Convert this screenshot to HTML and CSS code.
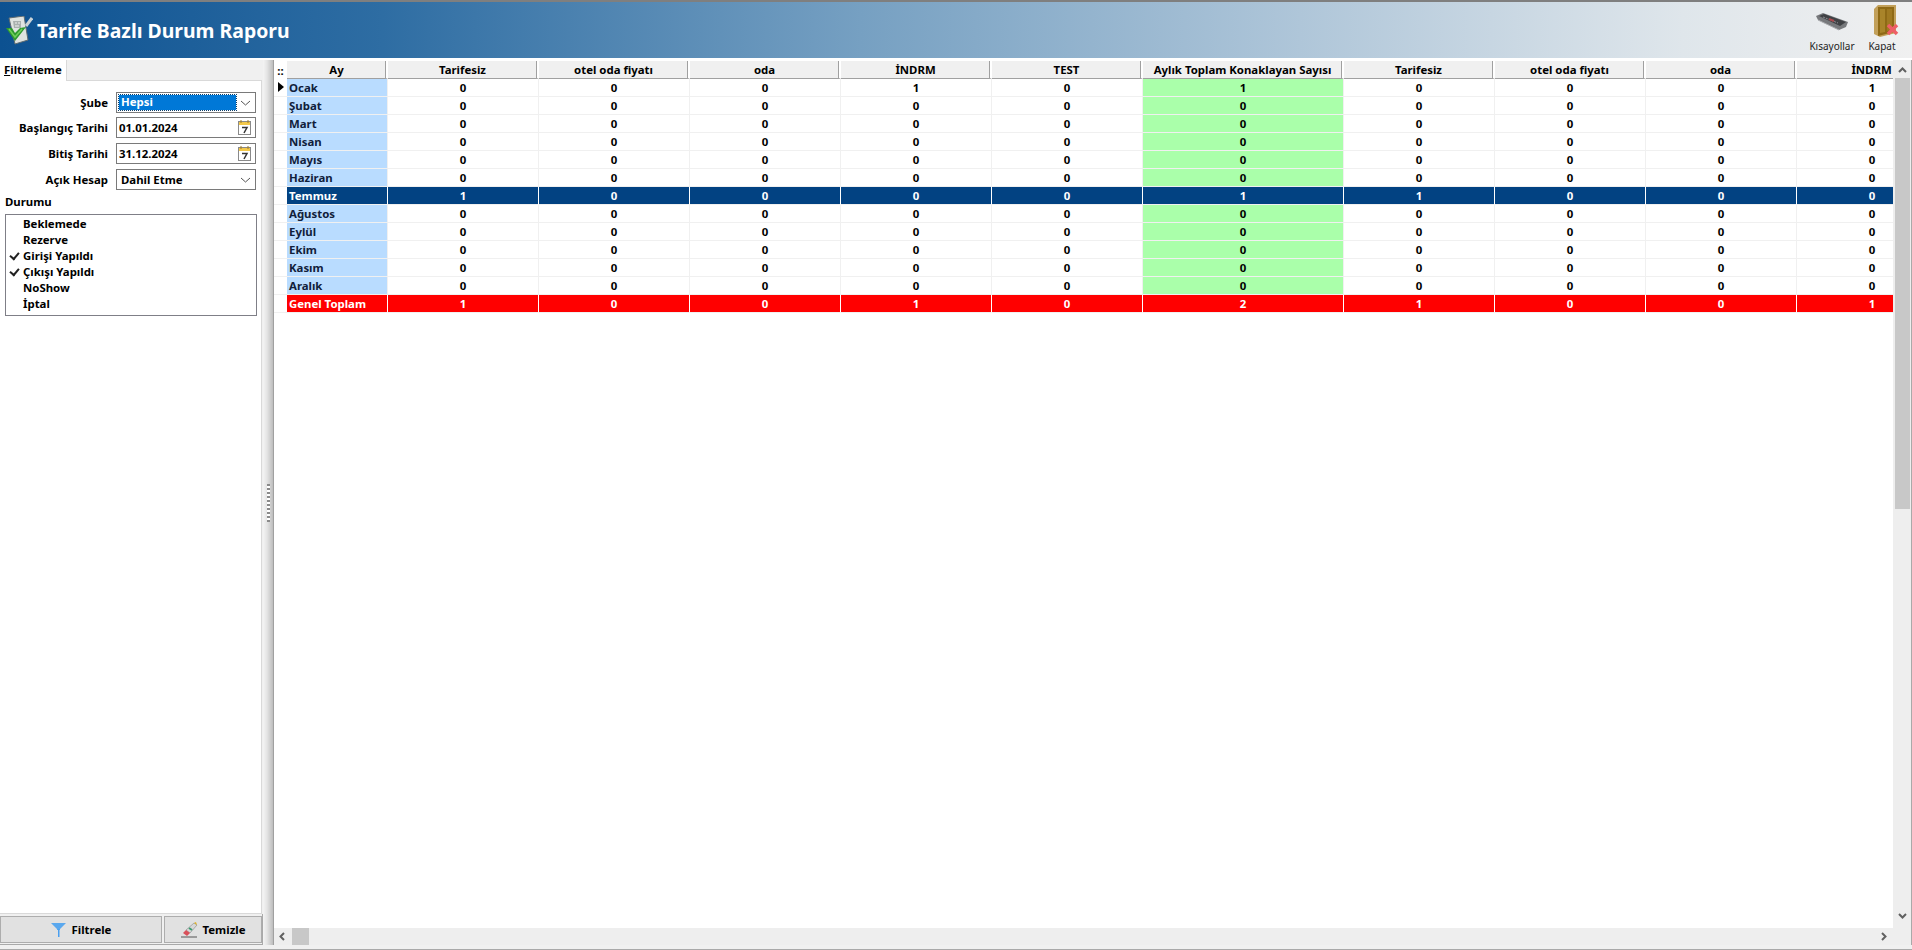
FILE: index.html
```html
<!doctype html>
<html lang="tr">
<head>
    <meta charset="utf-8">
    <title>Tarife Bazlı Durum Raporu</title>
    <link rel="stylesheet" href="styles.css">
</head>
<body>
    <header class="title-bar">
        <svg class="report-icon" width="28" height="29" viewBox="0 0 28 29">
            <path d="M4 2 L19 0 L23 24 L10 28 Z" fill="#dfe3e0" stroke="#5f6b70"/>
            <path d="M8 5h8v7H9Z" fill="#a9b0ae"/>
            <path d="M10 7h2M13 7h2M10 10h4" stroke="#eef0ee"/>
            <path d="M21 10 L27 2" stroke="#c9d2d6" stroke-width="3"/>
            <path d="M1 12 L7 12 L10 17 L15 12 L21 11 L10 25 Z" fill="#2f9a2f"/>
            <path d="M4 13 L10 21 L17 13" stroke="#6fd05a" stroke-width="1.500" fill="none"/>
        </svg>
        <h1>Tarife Bazlı Durum Raporu</h1>
        <div class="title-actions">
            <div class="action action-keys">
                <svg width="34" height="19" viewBox="0 0 34 19">
                    <path d="M1 4 L8 1 L33 10 L31 15 L24 18 L3 8 Z" fill="#77797c"/>
                    <path d="M4 4 L9 2 L31 10 L25 14 Z" fill="#3f4144"/>
                    <path d="M8 5l15 6" stroke="#8c8c90" stroke-width="1" stroke-dasharray="2 1"/>
                    <path d="M14 7l5 2" stroke="#a84a4e" stroke-width="2"/>
                    <path d="M3 8 L24 18" stroke="#a9abae" stroke-width="1"/>
                </svg>
                <span>Kısayollar</span>
            </div>
            <div class="action action-close">
                <svg width="25" height="32" viewBox="0 0 25 32">
                    <path d="M0 4 L4 0 L22 0 L22 28 L6 32 L0 29 Z" fill="#c2a05a"/>
                    <path d="M4 2 H20 V27 L4 31 Z" fill="#8f6a16"/>
                    <path d="M6 4 H11 V27 L6 28 Z" fill="#a9842a"/>
                    <path d="M13 4 H18 V25 L13 26 Z" fill="#a07a22"/>
                    <path d="M14 20l9 9M23 20l-9 9" stroke="#ee5f66" stroke-width="3.500"/>
                </svg>
                <span>Kapat</span>
            </div>
        </div>
    </header>

    <main class="workspace">
        <aside class="side">
            <div class="tab-strip">
                <div class="tab"><u>F</u>iltreleme</div>
            </div>
            <div class="filter-panel">
                <div class="form-row">
                    <label>Şube</label>
                    <div class="field">
                        <span class="field-selected">Hepsi</span>
                        <svg class="chevron" width="11" height="6" viewBox="0 0 11 6"><path d="M1 1l4.500 4 4.500-4" fill="none" stroke="#555"/></svg>
                    </div>
                </div>
                <div class="form-row">
                    <label>Başlangıç Tarihi</label>
                    <div class="field">
                        <span class="field-text">01.01.2024</span>
                        <svg class="calendar" width="13" height="15" viewBox="0 0 13 15">
                            <rect x="0.500" y="1.500" width="12" height="13" fill="#fff" stroke="#8a8a8a"/>
                            <rect x="1" y="2" width="11" height="3" fill="#f3c84a"/>
                            <path d="M3 0v3M10 0v3" stroke="#a07a20"/>
                            <path d="M4 7.500h5L6 13" fill="none" stroke="#333" stroke-width="1.500"/>
                        </svg>
                    </div>
                </div>
                <div class="form-row">
                    <label>Bitiş Tarihi</label>
                    <div class="field">
                        <span class="field-text">31.12.2024</span>
                        <svg class="calendar" width="13" height="15" viewBox="0 0 13 15">
                            <rect x="0.500" y="1.500" width="12" height="13" fill="#fff" stroke="#8a8a8a"/>
                            <rect x="1" y="2" width="11" height="3" fill="#f3c84a"/>
                            <path d="M3 0v3M10 0v3" stroke="#a07a20"/>
                            <path d="M4 7.500h5L6 13" fill="none" stroke="#333" stroke-width="1.500"/>
                        </svg>
                    </div>
                </div>
                <div class="form-row">
                    <label>Açık Hesap</label>
                    <div class="field">
                        <span class="field-text field-pad">Dahil Etme</span>
                        <svg class="chevron" width="11" height="6" viewBox="0 0 11 6"><path d="M1 1l4.500 4 4.500-4" fill="none" stroke="#555"/></svg>
                    </div>
                </div>
                <div class="group-label">Durumu</div>
                <ul class="check-list">
                    <li>Beklemede</li>
                    <li>Rezerve</li>
                    <li class="checked">Girişi Yapıldı</li>
                    <li class="checked">Çıkışı Yapıldı</li>
                    <li>NoShow</li>
                    <li>İptal</li>
                </ul>
            </div>
            <div class="side-buttons">
                <button class="btn btn-filter">
                    <svg width="16" height="15" viewBox="0 0 16 15"><path d="M0 1h15L9 7v1H6V7Z" fill="#5aa8ee"/><path d="M7 7h1.500v8H7z" fill="#4a9ff0"/></svg>
                    Filtrele
                </button>
                <button class="btn btn-clear">
                    <svg width="17" height="16" viewBox="0 0 17 16">
                        <path d="M5 8 L13 1 L16 3 L9 11 Z" fill="#d8d8d8" stroke="#777" stroke-width="0.500"/>
                        <path d="M13 1 L15 0 L16 3Z" fill="#e0b020"/>
                        <path d="M5 8 L9 11 L6 14 L2 11Z" fill="#d9505a"/>
                        <path d="M8 6 L11 8" stroke="#3a9a70" stroke-width="2"/>
                        <path d="M0 15h16" stroke="#555"/>
                    </svg>
                    Temizle
                </button>
            </div>
        </aside>

        <div class="splitter"><div class="grip"></div></div>

        <section class="grid-area">
            <div class="grid-main">
                <div class="grid-clip">
                    <table class="report">
                        <colgroup>
                            <col class="c-ind"><col class="c-month">
                            <col class="c-n"><col class="c-n"><col class="c-n"><col class="c-n"><col class="c-n">
                            <col class="c-total">
                            <col class="c-n"><col class="c-n"><col class="c-n"><col class="c-n">
                        </colgroup>
                        <thead>
                            <tr>
                                <th class="corner">::</th><th>Ay</th>
                                <th>Tarifesiz</th><th>otel oda fiyatı</th><th>oda</th><th>İNDRM</th><th>TEST</th>
                                <th>Aylık Toplam Konaklayan Sayısı</th>
                                <th>Tarifesiz</th><th>otel oda fiyatı</th><th>oda</th><th>İNDRM</th>
                            </tr>
                        </thead>
                        <tbody>
                            <tr><td class="ind current"></td><td class="month">Ocak</td><td>0</td><td>0</td><td>0</td><td>1</td><td>0</td><td class="total">1</td><td>0</td><td>0</td><td>0</td><td>1</td></tr>
                            <tr><td class="ind"></td><td class="month">Şubat</td><td>0</td><td>0</td><td>0</td><td>0</td><td>0</td><td class="total">0</td><td>0</td><td>0</td><td>0</td><td>0</td></tr>
                            <tr><td class="ind"></td><td class="month">Mart</td><td>0</td><td>0</td><td>0</td><td>0</td><td>0</td><td class="total">0</td><td>0</td><td>0</td><td>0</td><td>0</td></tr>
                            <tr><td class="ind"></td><td class="month">Nisan</td><td>0</td><td>0</td><td>0</td><td>0</td><td>0</td><td class="total">0</td><td>0</td><td>0</td><td>0</td><td>0</td></tr>
                            <tr><td class="ind"></td><td class="month">Mayıs</td><td>0</td><td>0</td><td>0</td><td>0</td><td>0</td><td class="total">0</td><td>0</td><td>0</td><td>0</td><td>0</td></tr>
                            <tr><td class="ind"></td><td class="month">Haziran</td><td>0</td><td>0</td><td>0</td><td>0</td><td>0</td><td class="total">0</td><td>0</td><td>0</td><td>0</td><td>0</td></tr>
                            <tr class="row-selected"><td class="ind"></td><td class="month">Temmuz</td><td>1</td><td>0</td><td>0</td><td>0</td><td>0</td><td class="total">1</td><td>1</td><td>0</td><td>0</td><td>0</td></tr>
                            <tr><td class="ind"></td><td class="month">Ağustos</td><td>0</td><td>0</td><td>0</td><td>0</td><td>0</td><td class="total">0</td><td>0</td><td>0</td><td>0</td><td>0</td></tr>
                            <tr><td class="ind"></td><td class="month">Eylül</td><td>0</td><td>0</td><td>0</td><td>0</td><td>0</td><td class="total">0</td><td>0</td><td>0</td><td>0</td><td>0</td></tr>
                            <tr><td class="ind"></td><td class="month">Ekim</td><td>0</td><td>0</td><td>0</td><td>0</td><td>0</td><td class="total">0</td><td>0</td><td>0</td><td>0</td><td>0</td></tr>
                            <tr><td class="ind"></td><td class="month">Kasım</td><td>0</td><td>0</td><td>0</td><td>0</td><td>0</td><td class="total">0</td><td>0</td><td>0</td><td>0</td><td>0</td></tr>
                            <tr><td class="ind"></td><td class="month">Aralık</td><td>0</td><td>0</td><td>0</td><td>0</td><td>0</td><td class="total">0</td><td>0</td><td>0</td><td>0</td><td>0</td></tr>
                            <tr class="row-sum"><td class="ind"></td><td class="month">Genel Toplam</td><td>1</td><td>0</td><td>0</td><td>1</td><td>0</td><td class="total">2</td><td>1</td><td>0</td><td>0</td><td>1</td></tr>
                        </tbody>
                    </table>
                </div>
                <div class="vscroll">
                    <svg class="sb-arrow" width="9" height="6" viewBox="0 0 9 6"><path d="M1 5l3.500-3.500L8 5" fill="none" stroke="#606060" stroke-width="2"/></svg>
                    <div class="vthumb"></div>
                    <div class="sb-fill"></div>
                    <svg class="sb-arrow" width="9" height="6" viewBox="0 0 9 6"><path d="M1 1l3.500 3.500L8 1" fill="none" stroke="#606060" stroke-width="2"/></svg>
                </div>
            </div>
            <div class="hscroll">
                <svg class="sb-arrow-h" width="6" height="9" viewBox="0 0 6 9"><path d="M5 1L1.500 4.500 5 8" fill="none" stroke="#606060" stroke-width="2"/></svg>
                <div class="hthumb"></div>
                <div class="sb-fill"></div>
                <svg class="sb-arrow-h" width="6" height="9" viewBox="0 0 6 9"><path d="M1 1l3.500 3.500L1 8" fill="none" stroke="#606060" stroke-width="2"/></svg>
            </div>
        </section>
    </main>
</body>
</html>
```

FILE: styles.css
```css
* {
    box-sizing: border-box;
}
html, body {
    height: 100%;
}
body {
    margin: 0;
    display: flex;
    flex-direction: column;
    overflow: hidden;
    background: #f0f0f0;
    color: #000;
    font-family: "Noto Sans", Verdana, sans-serif;
    font-size: 11.400px;
    font-weight: bold;
}

/* title bar */
.title-bar {
    height: 60px;
    flex: none;
    display: flex;
    align-items: center;
    padding-left: 5px;
    background: linear-gradient(to right, #0c5191 0%, #2e6da3 20%, #76a0c2 45%, #afc6d9 68%, #dfe6eb 88%, #f0f0f0 100%);
    border-top: 2px solid #7f7f7f;
    border-bottom: 2px solid #fff;
}
.report-icon {
    flex: none;
}
.title-bar h1 {
    margin: 0 0 0 4px;
    color: #fff;
    font-size: 19.400px;
    font-weight: bold;
    white-space: nowrap;
}
.title-actions {
    margin-left: auto;
    display: flex;
    height: 100%;
}
.action {
    display: flex;
    flex-direction: column;
    align-items: center;
    justify-content: flex-end;
    padding-bottom: 5px;
    font-weight: normal;
    font-size: 10px;
    color: #222;
}
.action-keys {
    width: 66px;
    margin-right: 1px;
}
.action-close {
    width: 32px;
    margin-right: 14px;
}
.action svg {
    margin-bottom: 2px;
}
.action-keys svg {
    margin-bottom: 8px;
}
.action-close svg {
    margin-left: 8px;
}

/* left side */
.workspace {
    flex: 1;
    min-height: 0;
    display: flex;
    padding-bottom: 4px;
    border-bottom: 1px solid #a9a9a9;
}
.side {
    width: 263px;
    flex: none;
    display: flex;
    flex-direction: column;
}
.tab-strip {
    height: 21px;
    flex: none;
    display: flex;
}
.tab {
    width: 67px;
    height: 21px;
    padding: 2px 0 0 4px;
    background: #fff;
    border-right: 1px solid #d9d9d9;
    white-space: nowrap;
    position: relative;
    z-index: 1;
}
.filter-panel {
    flex: 1;
    min-height: 0;
    margin-right: 1px;
    padding: 11px 0 0 5px;
    background: #fff;
    border-top: 1px solid #d9d9d9;
    border-right: 1px solid #d9d9d9;
    border-bottom: 1px solid #d9d9d9;
    margin-top: -1px;
}
.form-row {
    display: flex;
    align-items: center;
    height: 21px;
    margin-bottom: 5px;
}
.form-row:first-child {
    margin-bottom: 4px;
}
.form-row label {
    width: 103px;
    flex: none;
    text-align: right;
    white-space: nowrap;
}
.field {
    width: 140px;
    height: 21px;
    margin-left: 8px;
    display: flex;
    align-items: center;
    justify-content: space-between;
    padding: 0 3px 0 2px;
    border: 1px solid #7a7a7a;
    background: #fff;
}
.field-selected {
    width: 117px;
    height: 15px;
    line-height: 14px;
    padding-left: 2px;
    background: #0078d7;
    color: #fff;
    outline: 1px dotted #0d3f6a;
}
.field-pad {
    padding-left: 2px;
}
.chevron {
    margin-right: 1px;
}
.calendar {
    margin-right: 1px;
}
.group-label {
    margin-top: 5px;
    height: 19px;
    line-height: 14px;
}
.check-list {
    list-style: none;
    margin: 0;
    padding: 1px 0 0 17px;
    width: 252px;
    height: 102px;
    border: 1px solid #7f7f87;
}
.check-list li {
    height: 16px;
    line-height: 16px;
    position: relative;
}
.check-list li.checked::before {
    content: "";
    position: absolute;
    left: -13px;
    top: 4px;
    width: 7px;
    height: 4px;
    border-left: 2px solid #222;
    border-bottom: 2px solid #222;
    transform: rotate(-50deg);
}
.side-buttons {
    height: 31px;
    flex: none;
    display: flex;
    gap: 2px;
    padding: 2px 0 0;
    border-right: 1px solid #a9a9a9;
    border-bottom: 1px solid #a9a9a9;
}
.btn {
    height: 27px;
    display: flex;
    align-items: center;
    justify-content: center;
    gap: 5px;
    padding: 0;
    background: #e1e1e1;
    border: 1px solid #adadad;
    color: #000;
    font: inherit;
}
.btn-filter {
    width: 162px;
}
.btn-clear {
    width: 98px;
}

/* splitter */
.splitter {
    width: 10px;
    flex: none;
    display: flex;
    align-items: center;
    justify-content: center;
    background: linear-gradient(to right, #f4f4f4 0%, #e4e4e4 40%, #bdbdbd 100%);
}
.grip {
    width: 3px;
    height: 38px;
    background: repeating-linear-gradient(to bottom, #8a8a8a 0 2px, #fff 2px 4px);
}

/* grid */
.grid-area {
    flex: 1;
    min-width: 0;
    display: flex;
    flex-direction: column;
    background: #fff;
    border-left: 1px solid #a0a0a0;
    border-right: 1px solid #a9a9a9;
}
.grid-main {
    flex: 1;
    min-height: 0;
    display: flex;
}
.grid-clip {
    flex: 1;
    min-width: 0;
    overflow: hidden;
    padding-top: 1px;
}
.report {
    border-collapse: separate;
    border-spacing: 0;
    table-layout: fixed;
    width: 1674px;
}
.c-ind { width: 13px; }
.c-month { width: 101px; }
.c-n { width: 151px; }
.c-total { width: 201px; }
.report th {
    height: 18px;
    padding: 0;
    background: #f0f0f0;
    border-right: 2px solid #fff;
    border-bottom: 1px solid #a0a0a0;
    box-shadow: inset -1px 0 0 #a0a0a0;
    text-align: center;
    font-weight: bold;
    white-space: nowrap;
    overflow: hidden;
}
.report th.corner {
    border: 0;
    box-shadow: none;
    background: #fff;
    letter-spacing: 0;
}
.report td {
    height: 18px;
    padding: 0;
    border-right: 1px solid #f0f0f0;
    border-bottom: 1px solid #f0f0f0;
    text-align: center;
    white-space: nowrap;
    overflow: hidden;
}
.report td.ind {
    border-right: 0;
    position: relative;
}
.report td.current::after {
    content: "";
    position: absolute;
    left: 4px;
    top: 3px;
    border-left: 6px solid #000;
    border-top: 5.500px solid transparent;
    border-bottom: 5.500px solid transparent;
}
.report td.month {
    padding-left: 2px;
    text-align: left;
    background: #b9dcff;
    color: #10203a;
}
.report td.total {
    background: #aaffaa;
}
.row-selected td:not(.ind),
.row-selected td.month,
.row-selected td.total {
    background: #024282;
    color: #fff;
    border-right-color: #fff;
}
.row-sum td:not(.ind),
.row-sum td.month,
.row-sum td.total {
    background: #ff0000;
    color: #fff;
    border-right-color: #fff;
}

/* scrollbars */
.vscroll {
    width: 18px;
    flex: none;
    display: flex;
    flex-direction: column;
    align-items: center;
    background: #eee;
    padding-bottom: 4px;
}
.sb-arrow {
    flex: none;
    margin: 7px 0 5px;
}
.vthumb {
    width: 15px;
    height: 431px;
    flex: none;
    background: #c8c8c8;
}
.sb-fill {
    flex: 1;
}
.hscroll {
    height: 17px;
    flex: none;
    display: flex;
    align-items: center;
    background: #eee;
    padding: 0 24px 0 5px;
}
.sb-arrow-h {
    flex: none;
}
.hthumb {
    width: 17px;
    height: 17px;
    margin-left: 7px;
    background: #c8c8c8;
}
```
